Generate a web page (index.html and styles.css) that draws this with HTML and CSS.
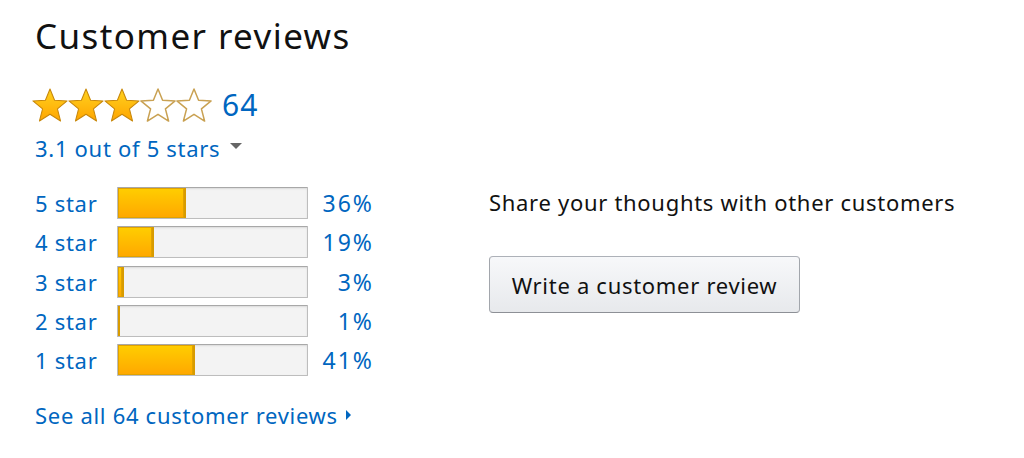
FILE: index.html
```html
<!DOCTYPE html>
<html lang="en">
<head>
    <meta charset="UTF-8">
    <meta name="viewport" content="width=device-width, initial-scale=1.0">
    <title>Customer reviews</title>
    <link rel="stylesheet" href="styles.css">
</head>
<body>

<svg width="0" height="0" class="defs">
    <defs>
        <linearGradient id="gold" x1="0" y1="0" x2="0" y2="1">
            <stop offset="0" stop-color="#ffd21f"/>
            <stop offset="1" stop-color="#ffa500"/>
        </linearGradient>
        <path id="star" d="M12 0.6L15.06 8.09 23.4 8.6 16.95 13.91 19.05 22 12 17.5 4.95 22 7.05 13.91 0.6 8.6 8.94 8.09Z"/>
    </defs>
</svg>

<div class="container">
    <h2>Customer reviews</h2>

    <div class="rating">
        <div class="stars">
            <svg viewBox="0 0 24 22.6" class="star full"><use href="#star"/></svg>
            <svg viewBox="0 0 24 22.6" class="star full"><use href="#star"/></svg>
            <svg viewBox="0 0 24 22.6" class="star full"><use href="#star"/></svg>
            <svg viewBox="0 0 24 22.6" class="star empty"><use href="#star"/></svg>
            <svg viewBox="0 0 24 22.6" class="star empty"><use href="#star"/></svg>
        </div>
        <a class="count">64</a>
    </div>

    <a class="summary">3.1 out of 5 stars <span class="caret"></span></a>

    <div class="main">
        <div class="histogram">
            <div class="row">
                <a class="label">5 star</a>
                <div class="bar"><div class="fill" style="width: 36%"></div></div>
                <a class="pct">36%</a>
            </div>
            <div class="row">
                <a class="label">4 star</a>
                <div class="bar"><div class="fill" style="width: 19%"></div></div>
                <a class="pct">19%</a>
            </div>
            <div class="row">
                <a class="label">3 star</a>
                <div class="bar"><div class="fill" style="width: 3%"></div></div>
                <a class="pct">3%</a>
            </div>
            <div class="row">
                <a class="label">2 star</a>
                <div class="bar"><div class="fill" style="width: 1%"></div></div>
                <a class="pct">1%</a>
            </div>
            <div class="row">
                <a class="label">1 star</a>
                <div class="bar"><div class="fill" style="width: 41%"></div></div>
                <a class="pct">41%</a>
            </div>
        </div>

        <div class="share">
            <p>Share your thoughts with other customers</p>
            <button>Write a customer review</button>
        </div>
    </div>

    <a class="see-all">See all 64 customer reviews <span class="arrow"></span></a>
</div>

</body>
</html>
```

FILE: styles.css
```css
body {
    font-family: "Noto Sans", Arial, sans-serif;
    margin: 0;
    background: #fff;
    color: #111;
}
.defs {
    position: absolute;
}
a {
    color: #0066c0;
    text-decoration: none;
}
.container {
    padding: 11px 0 0 35px;
}
h2 {
    font-size: 35px;
    font-weight: 400;
    letter-spacing: 1.4px;
    margin: 0;
    line-height: 50px;
}
.rating {
    display: flex;
    align-items: center;
    margin-top: 27px;
    height: 34px;
}
.stars {
    display: flex;
    margin-left: -3px;
}
.star {
    width: 36px;
    height: 34px;
}
.star.full {
    fill: url(#gold);
    stroke: #c7870b;
    stroke-width: 0.7;
    stroke-linejoin: round;
}
.star.empty {
    fill: #fff;
    stroke: #c9a152;
    stroke-width: 1;
    stroke-linejoin: round;
}
.count {
    font-size: 30px;
    letter-spacing: 1px;
    margin-left: 10px;
    line-height: 34px;
}
.summary {
    display: inline-flex;
    align-items: center;
    font-size: 22px;
    letter-spacing: 0.7px;
    margin-top: 12px;
    line-height: 28px;
}
.caret {
    display: inline-block;
    border-left: 6px solid transparent;
    border-right: 6px solid transparent;
    border-top: 6px solid #666;
    margin-left: 10px;
    margin-top: -4px;
}
.main {
    display: flex;
    margin-top: 25px;
}
.histogram {
    display: flex;
    flex-direction: column;
    gap: 7.3px;
}
.row {
    display: grid;
    grid-template-columns: 82px 191px 64px;
    align-items: center;
    height: 32px;
    font-size: 22px;
    letter-spacing: 0.7px;
}
.bar {
    height: 32px;
    box-sizing: border-box;
    background: #f3f3f3;
    border: 1px solid #bdbdbd;
    border-top-color: #a8a8a8;
    border-radius: 1px;
    box-shadow: inset 0 1px 2px rgba(0, 0, 0, 0.1);
    overflow: hidden;
}
.fill {
    height: 100%;
    box-sizing: border-box;
    background: linear-gradient(#ffce00, #ffa700);
    border-right: 2px solid #d89b00;
    box-shadow: inset 0 0 0 1px #e0a200;
}
.pct {
    text-align: right;
    font-size: 23px;
    letter-spacing: 2px;
    margin-right: -2px;
}
.share {
    margin-left: 117px;
}
.share p {
    font-size: 22px;
    letter-spacing: 0.7px;
    margin: 1px 0 0;
    line-height: 28px;
    color: #111;
}
button {
    display: block;
    margin-top: 40px;
    width: 311px;
    height: 57px;
    font-family: inherit;
    font-size: 22px;
    letter-spacing: 0.7px;
    color: #111;
    background: linear-gradient(#f7f8fa, #e7e9ec);
    border: 1px solid #adb1b8;
    border-color: #adb1b8 #a2a6ac #8d9096;
    border-radius: 4px;
    cursor: pointer;
}
.see-all {
    display: inline-flex;
    align-items: center;
    font-size: 22px;
    letter-spacing: 0.7px;
    margin-top: 25px;
    line-height: 28px;
}
.arrow {
    display: inline-block;
    border-top: 5px solid transparent;
    border-bottom: 5px solid transparent;
    border-left: 5px solid #0066c0;
    margin-left: 8px;
}
```
